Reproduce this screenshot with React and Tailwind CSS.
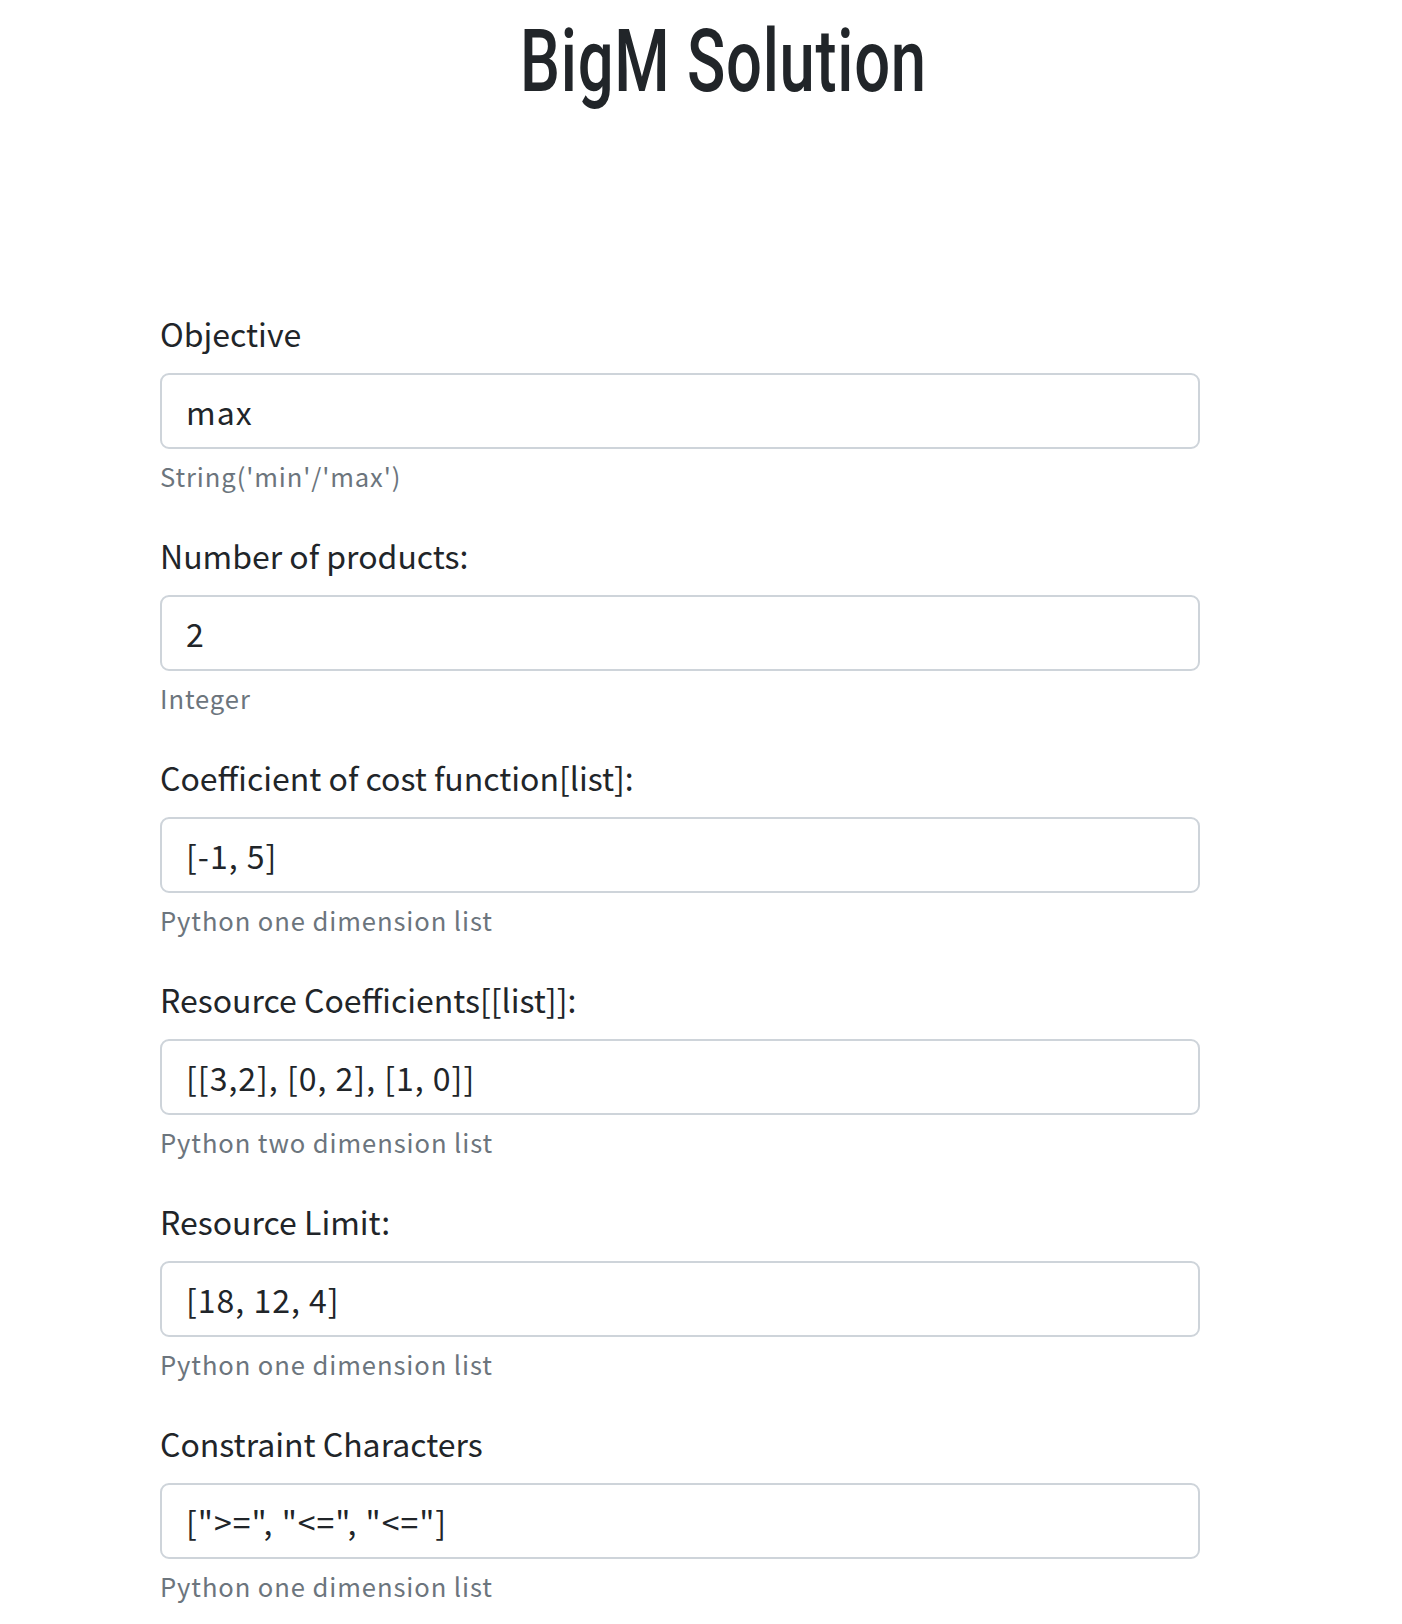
import { useState } from 'react'

const fields = [
  { label: 'Objective', value: 'max', help: "String('min'/'max')" },
  { label: 'Number of products:', value: '2', help: 'Integer' },
  { label: 'Coefficient of cost function[list]:', value: '[-1, 5]', help: 'Python one dimension list' },
  { label: 'Resource Coefficients[[list]]:', value: '[[3,2], [0, 2], [1, 0]]', help: 'Python two dimension list' },
  { label: 'Resource Limit:', value: '[18, 12, 4]', help: 'Python one dimension list' },
  { label: 'Constraint Characters', value: '[">=", "<=", "<="]', help: 'Python one dimension list' },
]

function Field({ label, value, help }) {
  const [val, setVal] = useState(value)
  return (
    <div className="mb-[36px]">
      <label className="block h-[48px] text-[32px] leading-[48px] text-[#212529] mb-4">{label}</label>
      <input
        value={val}
        onChange={e => setVal(e.target.value)}
        className="block w-full h-[76px] px-6 text-[32px] tracking-[1px] text-[#212529] bg-white border-2 border-[#ced4da] rounded-[9px] outline-none"
      />
      <small className="block mt-2 text-[25.6px] leading-[38px] tracking-[0.9px] text-[#6c757d]">{help}</small>
    </div>
  )
}

export default function App() {
  return (
    <div className="min-h-screen bg-white overflow-hidden" style={{ fontFamily: '"Noto Sans CJK KR", "Noto Sans", sans-serif' }}>
      <div className="pl-[44px] pt-[6px] text-center">
        <h1
          className="inline-block scale-x-[0.72] text-[88px] font-medium tracking-[1px] leading-[110px] text-[#212529]"
          style={{ fontFamily: 'Roboto, "Liberation Sans", sans-serif' }}
        >
          BigM Solution
        </h1>
      </div>
      <form className="ml-[160px] w-[1040px] mt-[193px]">
        {fields.map(f => <Field key={f.label} {...f} />)}
      </form>
    </div>
  )
}
